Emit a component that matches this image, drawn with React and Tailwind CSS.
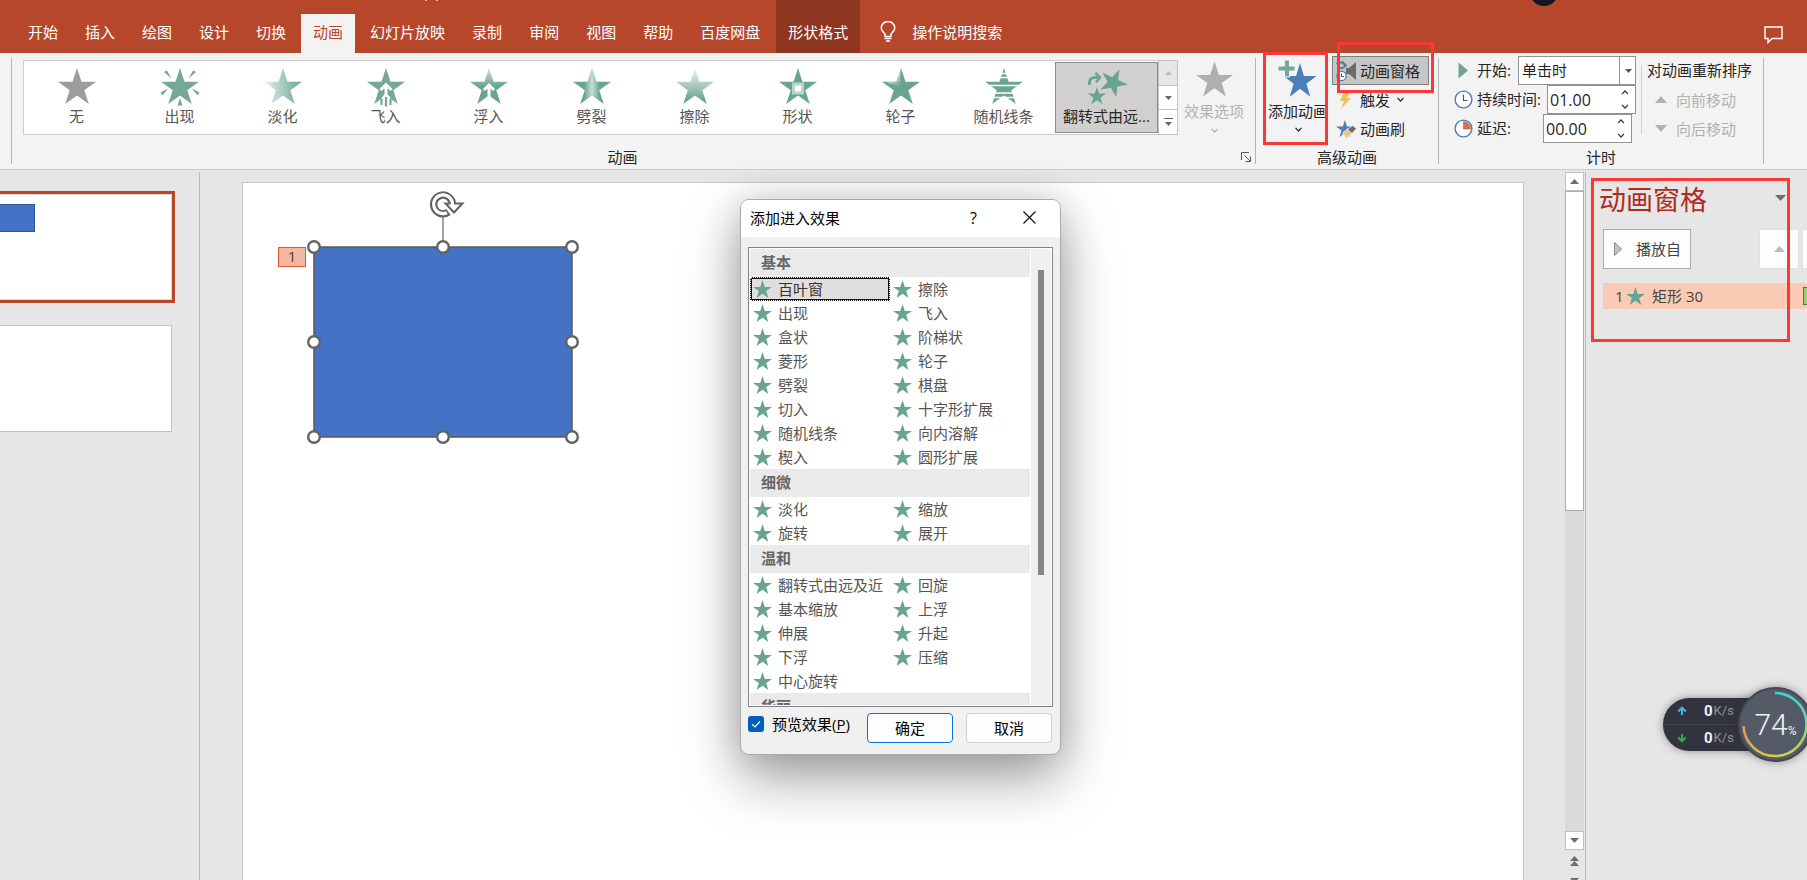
import React from "react";

const STAR = "M19 0L23.5 13.8H38L26.3 22.2L30.8 36L19 27.5L7.2 36L11.7 22.2L0 13.8H14.5Z";

function Star({ className = "h-[18px] w-[19px]", fill = "#69a492" }) {
  return (
    <svg viewBox="0 0 38 36" className={className} aria-hidden="true">
      <path d={STAR} fill={fill} />
    </svg>
  );
}

function Chevron({ className = "h-[5px] w-[7px]", up = false }) {
  return (
    <svg viewBox="0 0 7 5" className={className} fill="none" stroke="currentColor" strokeWidth="1.2" aria-hidden="true">
      <path d={up ? "M0.5 4.2L3.5 1L6.5 4.2" : "M0.5 0.8L3.5 4L6.5 0.8"} />
    </svg>
  );
}

function Triangle({ className = "h-[5px] w-[9px]", up = false }) {
  return (
    <svg viewBox="0 0 10 6" preserveAspectRatio="none" className={className} fill="currentColor" aria-hidden="true">
      <path d={up ? "M0 6L5 0L10 6Z" : "M0 0L5 6L10 0Z"} />
    </svg>
  );
}

const TABS = ["开始", "插入", "绘图", "设计", "切换", "动画", "幻灯片放映", "录制", "审阅", "视图", "帮助", "百度网盘"];

function TabBar() {
  return (
    <header className="relative flex h-[53px] shrink-0 items-end overflow-hidden bg-[#b7472a] pl-4 text-white">
      <nav className="flex items-end gap-[3px]">
        {TABS.map((t) => (
          <button
            key={t}
            className={
              t === "动画"
                ? "h-[39px] bg-[#f3f3f3] px-3 pb-1 text-[#b7472a]"
                : "h-[39px] px-3 pb-1"
            }
          >
            {t}
          </button>
        ))}
      </nav>
      <button className="ml-1 h-[53px] bg-[#8e3620] px-3 pt-[10px]">形状格式</button>
      <button className="ml-5 flex h-[39px] items-center gap-4 pb-1">
        <svg viewBox="0 0 16 21" className="h-[21px] w-4" fill="none" stroke="white" strokeWidth="1.5" aria-hidden="true">
          <path d="M5 15.5V13C3 11 1.2 9.6 1.2 7A6.5 6.3 0 0 1 14.8 7C14.8 9.6 13 11 11 13V15.5Z" />
          <path d="M4.6 17.6H11.4M6 20H10" />
        </svg>
        操作说明搜索
      </button>
      <svg viewBox="0 0 14 1" className="absolute left-[425px] top-0 h-px w-[14px]" aria-hidden="true">
        <path d="M0 0H2V1H0ZM11 0H13V1H11Z" fill="#e9c3b8" />
      </svg>
      <svg viewBox="0 0 28 28" className="absolute left-[1530px] top-[-22px] h-7 w-7" aria-hidden="true">
        <circle cx="14" cy="14" r="14" fill="#11161f" />
      </svg>
      <button aria-label="批注" className="mb-[9px] ml-auto mr-6">
        <svg viewBox="0 0 19 18" className="h-[18px] w-[19px]" fill="none" stroke="white" strokeWidth="1.4" aria-hidden="true">
          <path d="M1 1H18V12.5H8L4 16.5V12.5H1Z" />
        </svg>
      </button>
    </header>
  );
}

function EffectIcon({ kind }) {
  const g = "#69a492";
  const cls = "h-[42px] w-[46px]";
  const wrap = (children) => (
    <svg viewBox="-4 -2 46 42" className={cls} aria-hidden="true">{children}</svg>
  );
  switch (kind) {
    case "无":
      return wrap(<path d={STAR} fill="#9c9c9c" />);
    case "出现":
      return wrap(
        <g fill="#77a796">
          <path d={STAR} />
          <path d="M3 4L6 2.5L10.5 10.5ZM35 4L32 2.5L27.5 10.5ZM-0.5 24.5L7 20.5L1.5 27.5ZM38.5 24.5L31 20.5L36.5 27.5ZM19 30L21.5 37.5H16.5Z" />
        </g>
      );
    case "淡化":
      return wrap(
        <>
          <linearGradient id="fade"><stop offset="0" stopColor="#e6f1ee" /><stop offset="1" stopColor={g} /></linearGradient>
          <path d={STAR} fill="url(#fade)" />
        </>
      );
    case "飞入":
      return wrap(
        <>
          <path d={STAR} fill="#77a796" />
          <path d="M19 16V36M13.5 22L19 16.5L24.5 22" stroke="#fff" strokeWidth="3" fill="none" />
          <path d="M15 29L19 25L23 29V38H15Z" fill="#fff" />
          <path d="M14.5 31V37M19 29V38.5M23.5 31V37" stroke="#77a796" strokeWidth="2.2" />
        </>
      );
    case "浮入":
      return wrap(
        <>
          <linearGradient id="float" x1="0" y1="0" x2="0" y2="1"><stop offset="0" stopColor="#cfe3dc" /><stop offset="0.5" stopColor={g} /></linearGradient>
          <path d={STAR} fill="url(#float)" />
          <path d="M19 29V17M14 22L19 17L24 22" stroke="#fff" strokeWidth="3" fill="none" />
        </>
      );
    case "劈裂":
      return wrap(
        <>
          <linearGradient id="split"><stop offset="0.3" stopColor={g} /><stop offset="0.5" stopColor="#c6ddd5" /><stop offset="0.7" stopColor={g} /></linearGradient>
          <path d={STAR} fill="url(#split)" />
        </>
      );
    case "擦除":
      return wrap(
        <>
          <linearGradient id="wipe" x1="0" y1="0" x2="0" y2="1"><stop offset="0" stopColor="#f0f7f5" /><stop offset="0.9" stopColor={g} /></linearGradient>
          <path d={STAR} fill="url(#wipe)" />
        </>
      );
    case "形状":
      return wrap(
        <>
          <path d={STAR} fill={g} />
          <rect x="13" y="14.5" width="12" height="12" fill="#b9d5cc" />
          <rect x="16" y="17.5" width="6" height="6" fill="#fff" />
        </>
      );
    case "轮子":
      return wrap(
        <>
          <linearGradient id="wheel" x1="0.2" y1="0" x2="0.8" y2="1"><stop offset="0.3" stopColor="#eef5f3" /><stop offset="1" stopColor={g} /></linearGradient>
          <path d={STAR} fill={g} />
          <path d="M18.5 1V19L4 14L3 13.800H14.500Z" fill="url(#wheel)" />
        </>
      );
    case "随机线条":
      return wrap(
        <>
          <path d={STAR} fill={g} />
          <path d="M10 5.5H28M10 9.5H28M0 17.5H38M5 25H33M5 29.5H33" stroke="#fff" strokeWidth="1.4" />
        </>
      );
    default:
      return wrap(
        <>
          <path d={STAR} fill={g} transform="translate(25.2 14.7) rotate(25) scale(.74) translate(-19 -20)" />
          <path d={STAR} fill={g} transform="translate(-.2 19) scale(.48)" />
          <path d="M1.500 17C0.500 11 4 8.500 10 9.500" stroke={g} strokeWidth="2.800" fill="none" />
          <path d="M7.500 4.800L12 9.500L8 14.300" stroke={g} strokeWidth="2.400" fill="none" />
        </>
      );
  }
}

const GALLERY = ["无", "出现", "淡化", "飞入", "浮入", "劈裂", "擦除", "形状", "轮子", "随机线条", "翻转式由远..."];

function Gallery() {
  return (
    <div className="flex h-[75px] border border-[#cdcdcd] bg-white pl-px">
      {GALLERY.map((name) => (
        <button
          key={name}
          className={
            name === "翻转式由远..."
              ? "mt-px flex h-[71px] w-[103px] flex-col items-center border border-[#8a8a86] bg-[#d1d0ce] pt-[3px] text-[#262626]"
              : "mt-px flex h-[71px] w-[103px] flex-col items-center pt-1 text-[#555]"
          }
        >
          <EffectIcon kind={name} />
          <span className="-mt-[2px] leading-5">{name}</span>
        </button>
      ))}
      <div className="-my-px -mr-px flex w-5 flex-col border border-[#c3c3c3] text-[#666]">
        <button aria-label="上一行" className="flex flex-1 items-center justify-center bg-[#e6e6e6] text-[#bbb]"><Triangle up className="h-1 w-[7px]" /></button>
        <button aria-label="下一行" className="flex flex-1 items-center justify-center border-y border-[#c3c3c3]"><Triangle className="h-1 w-[7px]" /></button>
        <button aria-label="更多" className="flex flex-1 flex-col items-center justify-center gap-[3px]">
          <span className="h-px w-[9px] bg-[#666]" />
          <Triangle className="h-1 w-[7px]" />
        </button>
      </div>
    </div>
  );
}

function Divider() {
  return <div className="my-[5px] w-px bg-[#b4b4b4]" />;
}

function ClockIcon({ wedge = false }) {
  return (
    <svg viewBox="0 0 19 19" className="h-[19px] w-[19px]" aria-hidden="true">
      <circle cx="9.5" cy="9.5" r="8.4" fill="#fff" stroke="#4a7fb5" strokeWidth="1.4" />
      {wedge ? (
        <path d="M9.5 2.5A7 7 0 0 1 16.5 10H9.5Z" fill="#e2694f" stroke="#b9564a" strokeWidth="0.6" />
      ) : (
        <path d="M9.5 4.5V10.5H13.5" fill="none" stroke="#555" strokeWidth="1.2" />
      )}
    </svg>
  );
}

function Spinner({ id, value, className = "" }) {
  return (
    <div className={`ml-auto flex h-[29px] w-[89px] border border-[#939393] bg-white ${className}`}>
      <input id={id} defaultValue={value} className="w-[66px] bg-transparent pl-[2px] text-[16px] text-[#1f1f1f] outline-none" />
      <div className="flex flex-1 flex-col text-[#333]">
        <button aria-label="增加" className="flex flex-1 items-center justify-center"><Chevron up className="h-[5px] w-2" /></button>
        <button aria-label="减少" className="flex flex-1 items-center justify-center"><Chevron className="h-[5px] w-2" /></button>
      </div>
    </div>
  );
}

function Ribbon() {
  return (
    <section className="flex h-[117px] shrink-0 border-b border-[#cfcfcf] bg-[#f3f3f3] pl-[11px] text-[#262626]">
      <Divider />
      <div className="flex flex-col justify-between">
        <div className="flex gap-1 pl-[11px] pr-[9px] pt-[7px]">
          <Gallery />
          <button className="flex w-[64px] flex-col items-center text-[#b1b1b1]">
            <Star className="mt-px h-9 w-[37px]" fill="#b0aeb0" />
            <span className="mt-1 leading-5">效果选项</span>
            <Chevron className="mt-[7px] h-[5px] w-[7px]" />
          </button>
        </div>
        <div className="flex items-center pb-[2px] pr-1">
          <span className="flex-1 pr-2 text-center leading-5">动画</span>
          <button aria-label="动画选项">
            <svg viewBox="0 0 10 10" className="h-[10px] w-[10px]" fill="none" stroke="#555" aria-hidden="true">
              <path d="M0.5 8V0.5H8M3.5 3.5L9 9M9.5 4.5V9.5H4.5" />
            </svg>
          </button>
        </div>
      </div>
      <Divider />
      <div className="flex flex-col justify-between">
        <div className="flex gap-1 pl-3 pr-[9px] pt-[3px]">
          <button className="relative flex w-[60px] flex-col items-center">
            <svg viewBox="0 0 46 44" className="h-[44px] w-[46px]" aria-hidden="true">
              <path d={STAR} fill="#4a80b8" transform="translate(8.5 7) scale(.87 .94)" />
              <path d="M9.5 4H14.500V10H20V15H14.500V21H9.5V15H3V10H9.5Z" fill="#77a796" stroke="#f3f3f3" strokeWidth="1" />
            </svg>
            <span className="mt-px whitespace-nowrap leading-5">添加动画</span>
            <Chevron className="mt-[6px] h-[5px] w-[7px]" />
            <span className="pointer-events-none absolute -left-[5px] -top-1 right-0 z-20 h-[93px] border-[3px] border-[#fb3838]" />
          </button>
          <div className="flex flex-col">
            <button className="relative flex h-[29px] w-[97px] items-center gap-[3px] border border-[#7f7f7f] bg-[#c6c6c6] pl-[3px]">
              <svg viewBox="0 0 21 22" className="h-[22px] w-[21px]" aria-hidden="true">
                <path d="M10 8H13L20 2V20L13 14H10Z" fill="#6b6b6b" />
                <path d="M0.500 4C3 1.500 7 2 9 5.500M6 1.500L10 5.500L5.500 9M1 8H7" fill="none" stroke="#4a80b8" strokeWidth="1.800" />
                <circle cx="5.500" cy="16" r="4.600" fill="#fff" stroke="#4a80b8" strokeWidth="1.400" />
                <path d="M5.500 13.500V16.500H8" fill="none" stroke="#555" />
              </svg>
              动画窗格
              <span className="pointer-events-none absolute -bottom-[9px] -right-[6px] -top-[15px] left-1 z-20 border-[3px] border-[#fb3838]" />
            </button>
            <button className="flex h-[29px] items-center gap-[3px] pl-1">
              <svg viewBox="0 0 21 20" className="h-5 w-[21px]" aria-hidden="true">
                <path d="M8 2H14L11 8H15L5 19L8 11H4Z" fill="#f0c060" />
              </svg>
              触发
              <Chevron className="ml-1 h-[5px] w-[7px]" />
            </button>
            <button className="flex h-[29px] items-center gap-[3px] pl-1">
              <svg viewBox="0 0 21 20" className="h-5 w-[21px]" aria-hidden="true">
                <path d={STAR} fill="#4a80b8" transform="translate(0 1) scale(.47)" />
                <path d="M6.500 14L12 9.500L16 14.500L10.500 19.500Z" fill="#f3c276" stroke="#f3f3f3" strokeWidth="0.800" />
                <path d="M11.500 10.500L16.500 6.500L20.500 9.500L16 14.500Z" fill="#6b6b6b" stroke="#f3f3f3" strokeWidth="0.800" />
              </svg>
              动画刷
            </button>
          </div>
        </div>
        <span className="pb-[2px] text-center leading-5">高级动画</span>
      </div>
      <Divider />
      <div className="flex flex-col justify-between">
        <div className="flex pl-[15px] pr-[11px] pt-[3px]">
          <div className="flex w-[182px] flex-col">
            <div className="flex h-[29px] items-center gap-1">
              <svg viewBox="0 0 19 19" className="h-[19px] w-[19px]" aria-hidden="true"><path d="M4.5 1.500L14 9.5L4.5 17.500Z" fill="#6fa592" /></svg>
              <label htmlFor="start" className="pb-[2px]">开始:</label>
              <div className="relative ml-auto h-[29px] w-[118px]">
                <select id="start" className="h-full w-full appearance-none border border-[#939393] bg-white pb-[2px] pl-[3px] text-[15px] text-[#1f1f1f]">
                  <option>单击时</option>
                </select>
                <span className="pointer-events-none absolute inset-y-0 right-0 flex w-[17px] items-center justify-center border-l border-[#939393] text-[#555]">
                  <Triangle className="h-1 w-[7px]" />
                </span>
              </div>
            </div>
            <div className="flex h-[29px] items-center gap-1">
              <ClockIcon />
              <label htmlFor="duration" className="whitespace-nowrap pb-[2px]">持续时间:</label>
              <Spinner id="duration" value="01.00" />
            </div>
            <div className="flex h-[29px] items-center gap-1">
              <ClockIcon wedge />
              <label htmlFor="delay" className="pb-[2px]">延迟:</label>
              <Spinner id="delay" value="00.00" className="mr-1" />
            </div>
          </div>
          <div className="mb-[9px] ml-[5px] mt-[9px] w-px bg-[#cfcfcf]" />
          <div className="flex flex-col pl-[5px]">
            <span className="flex h-[29px] items-center pb-[2px]">对动画重新排序</span>
            <button className="flex h-[29px] items-center gap-[9px] pl-2 text-[#b1b1b1]"><Triangle up className="h-[7px] w-3" />向前移动</button>
            <button className="flex h-[29px] items-center gap-[9px] pl-2 text-[#b1b1b1]"><Triangle className="h-[7px] w-3" />向后移动</button>
          </div>
        </div>
        <span className="pb-[2px] text-center leading-5">计时</span>
      </div>
      <Divider />
    </section>
  );
}

function Thumbnails() {
  return (
    <aside className="mt-[2px] flex w-[200px] shrink-0 flex-col border-r border-[#bcbcbc] pt-[19px]">
      <div className="h-28 w-[175px] border-[3px] border-l-0 border-[#b7472a]">
        <div className="h-full border border-l-0 border-[#dcdcdc] bg-white pt-[9px]">
          <div className="h-7 w-[35px] border border-l-0 border-[#2f5597] bg-[#4472c4]" />
        </div>
      </div>
      <div className="mt-[22px] h-[107px] w-[172px] border border-l-0 border-[#c3c3c3] bg-white" />
    </aside>
  );
}

function SelectedShape() {
  const xs = [10, 139, 268];
  const ys = [51, 146, 241];
  return (
    <svg viewBox="0 0 280 252" className="absolute left-[61px] top-[13px] h-[252px] w-[280px] overflow-visible" aria-label="矩形 30">
      <rect x="10" y="51" width="258" height="190" fill="#4472c4" stroke="#5a5a5a" strokeWidth="1.5" />
      <path d="M139 20V46" stroke="#636363" strokeWidth="1.2" />
      <path d="M144.500 16.100A9.400 9.400 0 1 1 148.400 8.300" fill="none" stroke="#636363" strokeWidth="7.400" />
      <path d="M141.500 7.500H158.500L150 16.500Z" fill="#fff" stroke="#636363" strokeWidth="2" />
      <path d="M143 16.800A9.400 9.400 0 1 1 148.400 9.500" fill="none" stroke="#fff" strokeWidth="3.200" />
      {ys.map((y) =>
        xs.map((x) =>
          x === 139 && y === 146 ? null : (
            <circle key={`${x}-${y}`} cx={x} cy={y} r="5.800" fill="#fff" stroke="#636363" strokeWidth="2.400" />
          )
        )
      )}
    </svg>
  );
}

function Canvas() {
  return (
    <div className="min-w-0 flex-1 pl-[42px] pr-[41px] pt-3">
      <div className="relative h-full overflow-hidden border border-b-0 border-[#c6c6c6] bg-white">
        <SelectedShape />
        <span className="absolute left-[35px] top-[64px] flex h-5 w-7 items-center justify-center border border-[#dd5a38] bg-[#f5b79d] pb-[2px] text-[#444]">1</span>
      </div>
    </div>
  );
}

function CanvasScroll() {
  return (
    <div className="mt-[2px] flex w-[19px] shrink-0 flex-col items-center text-[#6d6d6d]">
      <button aria-label="向上滚动" className="flex h-[19px] w-full shrink-0 items-center justify-center border border-[#c0c0c0] bg-white"><Triangle up className="h-[5px] w-[9px]" /></button>
      <div className="w-full flex-1 bg-[#dadada]">
        <div className="h-[320px] border border-[#ababab] bg-white" />
      </div>
      <button aria-label="向下滚动" className="flex h-[19px] w-full shrink-0 items-center justify-center border border-[#c0c0c0] bg-white"><Triangle className="h-[5px] w-[9px]" /></button>
      <button aria-label="上一张" className="flex h-[22px] shrink-0 flex-col items-center justify-center"><Triangle up /><Triangle up /></button>
      <button aria-label="下一张" className="flex h-2 shrink-0 flex-col items-center overflow-hidden pt-[6px]"><Triangle className="h-[5px] w-[9px] shrink-0" /></button>
    </div>
  );
}

function Speed({ up }) {
  return (
    <div className="flex h-[26px] items-center pl-[14px] text-[#8d9099]">
      <svg viewBox="0 0 10 10" className="h-[10px] w-[10px]" fill="none" stroke={up ? "#45aeea" : "#2fb344"} strokeWidth="2" aria-hidden="true">
        <path d={up ? "M5 9V2M1.200 5.500L5 1.700L8.800 5.500" : "M5 1V8M1.200 4.500L5 8.300L8.800 4.500"} />
      </svg>
      <span className="ml-[17px] font-['Roboto',sans-serif] text-[15px] font-bold text-[#f0f0f2]">0</span>
      <span className="ml-px font-['Roboto',sans-serif] text-[13px]">K/s</span>
    </div>
  );
}

function NetMeter() {
  return (
    <div className="absolute -right-[6px] top-[515px] flex items-center">
      <div className="-mr-5 h-[53px] w-[95px] rounded-l-full bg-[#31343e] shadow-[0_0_8px_rgba(60,50,70,0.5)]">
        <Speed up />
        <div className="h-px bg-[#3d414c]" />
        <Speed />
      </div>
      <div className="relative flex h-[75px] w-[75px] items-center justify-center rounded-full border-2 border-[#444853] bg-[#555a67] font-['Roboto',sans-serif] text-[#f2f2f4] shadow-[0_0_8px_rgba(60,50,70,0.5)]">
        <svg viewBox="0 0 71 71" className="absolute inset-0 h-full w-full" fill="none" strokeWidth="2.500" aria-hidden="true">
          <linearGradient id="ring" x1="0" y1="0" x2="0" y2="1">
            <stop offset="0" stopColor="#3fd0cf" /><stop offset="0.500" stopColor="#7fd69a" /><stop offset="1" stopColor="#cfd04e" />
          </linearGradient>
          <linearGradient id="ringEnd" x1="0" y1="0" x2="1" y2="1">
            <stop offset="0" stopColor="#e79b52" /><stop offset="1" stopColor="#d8cf48" />
          </linearGradient>
          <path d="M35 4A31.500 31.500 0 0 1 35 67" stroke="url(#ring)" />
          <path d="M35 67A31.500 31.500 0 0 1 3.500 37" stroke="url(#ringEnd)" />
        </svg>
        <span className="text-[30px] font-light">74</span>
        <span className="pt-3 text-[12px]">%</span>
      </div>
    </div>
  );
}

function AnimationPane() {
  return (
    <aside className="relative ml-px mt-[2px] w-[222px] shrink-0 overflow-hidden border-l border-[#bcbcbc] pl-[17px] text-[#444]">
      <div className="flex items-center justify-between pr-[21px] pt-2">
        <h2 className="-ml-1 text-[27px] leading-10 text-[#b02b1e]">动画窗格</h2>
        <button aria-label="窗格选项" className="mb-1 text-[#6d6d6d]"><Triangle className="h-[6px] w-[11px]" /></button>
      </div>
      <div className="mt-[9px] flex">
        <button className="flex h-10 w-[88px] items-center gap-[14px] border border-[#ababab] bg-[#fdfdfd] pl-[10px]">
          <svg viewBox="0 0 8 14" className="h-[14px] w-2" aria-hidden="true"><path d="M0.500 0.500V13.500L7.500 7Z" fill="#c3c3c3" stroke="#8b8b8b" /></svg>
          播放自
        </button>
        <button aria-label="向前移动" className="ml-auto flex h-10 w-10 items-center justify-center border border-[#e0e0e0] bg-[#fdfdfd] text-[#bdbdbd]"><Triangle up className="h-[6px] w-[11px]" /></button>
        <div className="ml-[3px] h-10 w-[5px] border border-r-0 border-[#e0e0e0] bg-[#fdfdfd]" />
      </div>
      <div className="mt-[14px] flex h-[26px] items-center bg-[#fbcab5] pl-3">
        <span className="w-[11px]">1</span>
        <Star className="h-[18px] w-[19px]" />
        <span className="ml-[7px]">矩形 30</span>
        <span className="ml-auto h-[18px] w-1 border border-r-0 border-[#4c7a35] bg-[#97d077]" />
      </div>
      <span className="pointer-events-none absolute left-[5px] top-[6px] h-[164px] w-[199px] border-[3px] border-[#fb3838]" />
      <NetMeter />
    </aside>
  );
}

const EFFECTS = [
  ["基本", ["百叶窗", "擦除", "出现", "飞入", "盒状", "阶梯状", "菱形", "轮子", "劈裂", "棋盘", "切入", "十字形扩展", "随机线条", "向内溶解", "楔入", "圆形扩展"]],
  ["细微", ["淡化", "缩放", "旋转", "展开"]],
  ["温和", ["翻转式由远及近", "回旋", "基本缩放", "上浮", "伸展", "升起", "下浮", "压缩", "中心旋转"]],
  ["华丽", []],
];

function EffectDialog() {
  return (
    <div role="dialog" aria-label="添加进入效果" className="absolute left-[740px] top-[199px] z-30 w-[321px] rounded-[9px] border border-[#a9a9a9] bg-[#f0f0f0] text-black shadow-[0_24px_56px_rgba(0,0,0,0.36),0_0_36px_rgba(0,0,0,0.14)]">
      <div className="flex h-[37px] items-center rounded-t-[8px] bg-white pb-[2px] pl-[9px] pr-6">
        <span className="flex-1">添加进入效果</span>
        <button aria-label="帮助" className="mr-[46px] text-[16px]">?</button>
        <button aria-label="关闭">
          <svg viewBox="0 0 13 13" className="h-[13px] w-[13px]" stroke="#111" strokeWidth="1.200" aria-hidden="true"><path d="M0.500 0.500L12.500 12.500M12.500 0.500L0.500 12.500" /></svg>
        </button>
      </div>
      <div className="px-[7px] pb-[11px] pt-[10px]">
        <div className="flex h-[460px] border border-[#7e838c] bg-white p-px">
          <div className="w-[280px] overflow-hidden">
            {EFFECTS.map(([group, items]) => (
              <section key={group}>
                <h3 className="h-7 bg-[#eaeaea] pl-[11px] font-bold leading-[26px] text-[#666]">{group}</h3>
                <div className="grid grid-cols-2">
                  {items.map((name) => (
                    <button
                      key={name}
                      className={
                        name === "百叶窗"
                          ? "flex h-6 items-center whitespace-nowrap border-2 border-[#111] bg-[#e1dfdd] text-[#333] outline-1 -outline-offset-1 outline-dotted outline-white"
                          : "flex h-6 items-center whitespace-nowrap pl-[2px] text-[#555]"
                      }
                    >
                      <Star className="ml-px h-[18px] w-[19px]" />
                      <span className="ml-[6px]">{name}</span>
                    </button>
                  ))}
                </div>
              </section>
            ))}
          </div>
          <div className="ml-px flex-1 bg-[#f0f0f0] pl-[7px] pt-[21px]">
            <div className="h-[305px] w-[6px] bg-[#858585]" />
          </div>
        </div>
        <div className="mt-[6px] flex items-center pr-px">
          <label className="relative mb-2 flex flex-1 items-center gap-2">
            <input type="checkbox" defaultChecked className="h-4 w-4 appearance-none rounded-[3px] bg-[#005fb8]" />
            <svg viewBox="0 0 16 16" className="pointer-events-none absolute left-0 h-4 w-4" fill="none" stroke="white" strokeWidth="1.200" aria-hidden="true"><path d="M4 8.300L7 11L12 5.500" /></svg>
            <span>预览效果(<u className="underline-offset-2">P</u>)</span>
          </label>
          <button className="h-[30px] w-[86px] rounded-[4px] border border-[#0078d4] bg-[#fdfdfd]">确定</button>
          <button className="ml-[13px] h-[30px] w-[86px] rounded-[4px] border border-[#d0d0d0] bg-[#fdfdfd]">取消</button>
        </div>
      </div>
    </div>
  );
}

export default function App() {
  return (
    <div className="relative flex h-screen flex-col overflow-hidden bg-[#e6e6e6] font-['Open_Sans','Noto_Sans_CJK_SC',sans-serif] text-[15px] leading-5">
      <TabBar />
      <Ribbon />
      <main className="flex min-h-0 flex-1">
        <Thumbnails />
        <Canvas />
        <CanvasScroll />
        <AnimationPane />
      </main>
      <EffectDialog />
    </div>
  );
}
